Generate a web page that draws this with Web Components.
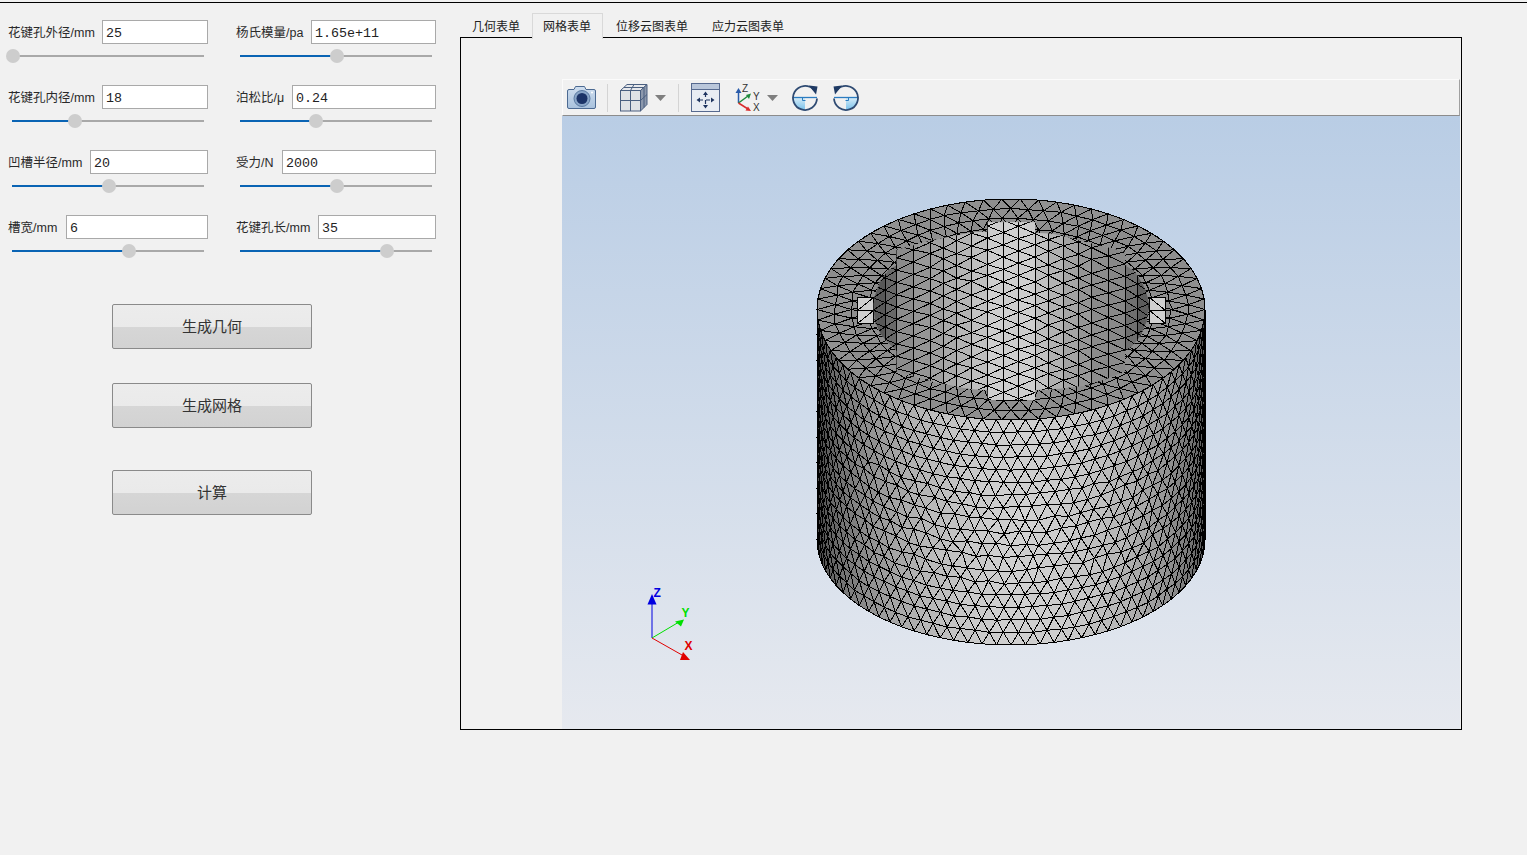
<!DOCTYPE html>
<html lang="zh">
<head>
<meta charset="utf-8">
<title>花键孔</title>
<style>
  html, body { margin: 0; height: 100%; background: #f1f1f1; overflow: hidden; }
  body { font-family: "Liberation Sans", "Noto Sans CJK SC", sans-serif; color: #222; }
</style>
</head>
<body>
<main-window>
  <param-panel slot="left">
    <param-field label="花键孔外径/mm" label-width="94" value="25" pos="1"></param-field>
    <param-field label="杨氏模量/pa" label-width="75" value="1.65e+11" pos="97"></param-field>
    <param-field label="花键孔内径/mm" label-width="94" value="18" pos="63"></param-field>
    <param-field label="泊松比/μ" label-width="56" value="0.24" pos="76"></param-field>
    <param-field label="凹槽半径/mm" label-width="82" value="20" pos="97"></param-field>
    <param-field label="受力/N" label-width="46" value="2000" pos="97"></param-field>
    <param-field label="槽宽/mm" label-width="58" value="6" pos="117"></param-field>
    <param-field label="花键孔长/mm" label-width="82" value="35" pos="147"></param-field>
    <div slot="actions">
      <push-button>生成几何</push-button>
      <push-button style="margin-top:34px">生成网格</push-button>
      <push-button style="margin-top:42px">计算</push-button>
    </div>
  </param-panel>
  <tab-panel slot="right" tabs="几何表单,网格表单,位移云图表单,应力云图表单" active="1">
    <viewer-pane>
      <viewer-toolbar slot="toolbar"></viewer-toolbar>
      <mesh-view></mesh-view>
    </viewer-pane>
  </tab-panel>
</main-window>

<script>
class MainWindow extends HTMLElement {
  constructor() {
    super();
    this.attachShadow({ mode: 'open' }).innerHTML = `
      <style>
        :host { display: block; height: 855px; box-sizing: border-box; padding-top: 2px; }
        .line { height: 1px; background: #000; }
        .row { display: flex; }
        .left { width: 460px; flex: none; }
        .right { flex: none; }
      </style>
      <div class="line"></div>
      <div class="row">
        <div class="left"><slot name="left"></slot></div>
        <div class="right"><slot name="right"></slot></div>
      </div>`;
  }
}

class ParamPanel extends HTMLElement {
  constructor() {
    super();
    this.attachShadow({ mode: 'open' }).innerHTML = `
      <style>
        :host { display: block; padding: 17px 0 0 8px; }
        .grid { display: grid; grid-template-columns: 200px 200px; column-gap: 28px; row-gap: 22px; }
        .actions { margin: 46px 0 0 104px; width: 200px; }
      </style>
      <div class="grid"><slot></slot></div>
      <div class="actions"><slot name="actions"></slot></div>`;
  }
}

class ParamField extends HTMLElement {
  connectedCallback() {
    const root = this.shadowRoot || this.attachShadow({ mode: 'open' });
    const pos = Number(this.getAttribute('pos'));
    root.innerHTML = `
      <style>
        :host { display: block; font: 12.5px "Liberation Sans", "Noto Sans CJK SC", sans-serif; color: #2a2a2a; }
        .top { display: flex; align-items: center; height: 24px; }
        .label { flex: none; width: ${this.getAttribute('label-width')}px; white-space: nowrap; padding-bottom: 2px; }
        .input {
          flex: 1; height: 24px; box-sizing: border-box; border: 1px solid #a9a9a9; background: #fff;
          padding: 3px 3px 0; font: 13.33px/20px "Liberation Mono", "DejaVu Sans Mono", monospace; color: #222;
        }
        .slider { position: relative; height: 14px; margin: 5px 4px 0; }
        .track { position: absolute; left: 0; right: 0; top: 6px; height: 2px; background: #a9a9a9; }
        .fill { position: absolute; left: 0; top: 6px; height: 2px; background: #0a64b4; width: ${pos}px; }
        .knob { position: absolute; top: 0; left: ${pos - 7}px; width: 14px; height: 14px; border-radius: 50%; background: #cdcdcd; }
      </style>
      <div class="top"><span class="label">${this.getAttribute('label')}</span><div class="input">${this.getAttribute('value')}</div></div>
      <div class="slider"><div class="track"></div><div class="fill"></div><div class="knob"></div></div>`;
  }
}

class PushButton extends HTMLElement {
  constructor() {
    super();
    this.attachShadow({ mode: 'open' }).innerHTML = `
      <style>
        :host {
          display: flex; align-items: center; justify-content: center; box-sizing: border-box;
          width: 200px; height: 45px; border: 1px solid #8a8a8a; border-radius: 2px; padding-bottom: 2px;
          background: linear-gradient(#ececec 0, #eaeaea 50%, #d6d6d6 52%, #d2d2d2 100%);
          font: 15px "Noto Sans CJK SC", sans-serif; color: #333;
        }
      </style>
      <slot></slot>`;
  }
}

class TabPanel extends HTMLElement {
  connectedCallback() {
    const root = this.shadowRoot || this.attachShadow({ mode: 'open' });
    const active = Number(this.getAttribute('active'));
    const tabs = this.getAttribute('tabs').split(',').map((t, i) =>
      `<div class="tab${i === active ? ' on' : ''}">${t}</div>`).join('');
    root.innerHTML = `
      <style>
        :host { display: block; width: 1002px; padding-top: 10px; font: 12px "Noto Sans CJK SC", sans-serif; color: #222; }
        .tabs { display: flex; height: 24px; position: relative; z-index: 1; }
        .tab { padding: 2px 12px 0; height: 22px; line-height: 22px; white-space: nowrap; }
        .tab.on { padding: 1px 11px 0 10px; height: 24px; border: 1px solid #d9d9d9; border-bottom: 0; background: #f1f1f1; margin-right: 1px; }
        .frame { box-sizing: border-box; height: 693px; border: 1px solid #000; padding: 41px 1px 0 101px; }
      </style>
      <div class="tabs">${tabs}</div>
      <div class="frame"><slot></slot></div>`;
  }
}

class ViewerPane extends HTMLElement {
  constructor() {
    super();
    this.attachShadow({ mode: 'open' }).innerHTML = `
      <style>
        :host { display: flex; flex-direction: column; height: 650px; }
      </style>
      <slot name="toolbar"></slot>
      <slot></slot>`;
  }
}

class ViewerToolbar extends HTMLElement {
  constructor() {
    super();
    const caret = `<svg class="caret" width="11" height="6" viewBox="0 0 11 6"><path d="M0 0h11L5.500 6z" fill="#7f7f7f"/></svg>`;
    const rotate = (flip) => `
      <svg width="28" height="28" viewBox="0 1 28 28" ${flip ? 'style="transform:scaleX(-1)"' : ''}>
        <defs><linearGradient id="q${flip}" x1="0" y1="0" x2="0" y2="1"><stop offset="0" stop-color="#d8edf8"/><stop offset="1" stop-color="#7cc3ec"/></linearGradient></defs>
        <path d="M2 14.500a12 12 0 0 0 12 12V14.500z" fill="url(#q${flip})"/>
        <path d="M2 14.500h24" stroke="#2b7cc0" stroke-width="1.300" fill="none"/>
        <path d="M11.500 14.500v3h3" stroke="#2b7cc0" stroke-width="1" fill="none"/>
        <path d="M22.500 6.500A12 12 0 1 0 26 15.500" stroke="#2e4a72" stroke-width="1.800" fill="none"/>
        <path d="M18 2.500l8.500 1-1.500 8z" fill="#1f3a64"/>
      </svg>`;
    this.attachShadow({ mode: 'open' }).innerHTML = `
      <style>
        :host {
          display: flex; align-items: center; box-sizing: border-box; height: 37px; flex: none;
          background: #f1f1f1; border-top: 1px solid #fbfbfb; border-left: 1px solid #fbfbfb;
          border-right: 1px solid #a0a0a0; border-bottom: 1px solid #8c8c8c; padding-left: 4px;
        }
        svg { display: block; flex: none; }
        .sep { width: 1px; height: 28px; background: #d4d4d4; flex: none; }
      </style>
      <svg width="30" height="28" viewBox="0 1 30 28">
        <defs>
          <linearGradient id="cam" x1="0" y1="0" x2="0" y2="1"><stop offset="0" stop-color="#cfdeef"/><stop offset="1" stop-color="#a9c2dd"/></linearGradient>
        </defs>
        <path d="M2 6.500h5l1.500-3h9l1.500 3h8q1.500 0 1.500 1.500v16q0 1.500-1.500 1.500h-25q-1.500 0-1.500-1.500V8q0-1.500 1.500-1.500z" fill="url(#cam)" stroke="#4c6a92" stroke-width="1"/>
        <circle cx="15" cy="15.500" r="8" fill="#8aa6c8" stroke="#5a7aa2"/>
        <circle cx="15" cy="15.500" r="5.500" fill="#1c3468"/>
        <circle cx="25" cy="9.500" r="1" fill="#fff"/>
      </svg>
      <div class="sep" style="margin-left:10px"></div>
      <svg style="margin-left:11px" width="29" height="29" viewBox="0 0 29 29">
        <path d="M1.500 7.500L8 1.500h20l-6.500 6z" fill="#e6e8ec" stroke="#4a5f80"/>
        <path d="M21.500 7.500L28 1.500v20L21.500 28z" fill="#8d99ad" stroke="#4a5f80"/>
        <rect x="1.500" y="7.500" width="20" height="20.500" fill="#dfe2e6" stroke="#4a5f80"/>
        <path d="M11.500 7.500V28M1.500 17.500h20M5 4.500h20M15 1.500l-3.500 6M25 4.500v20M21.500 17.500L28 11.500" stroke="#4a5f80" fill="none"/>
      </svg>
      <div style="margin-left:7px">${caret}</div>
      <div class="sep" style="margin-left:12px"></div>
      <svg style="margin-left:12px" width="29" height="29" viewBox="0 0 29 29">
        <rect x="0.500" y="0.500" width="28" height="28" fill="#e9edf3" stroke="#56698f"/>
        <rect x="1" y="1" width="27" height="5" fill="#b9c6da"/>
        <path d="M1 6.500h27" stroke="#56698f"/>
        <g stroke="#1f3560" stroke-width="1.200" fill="#1f3560">
          <path d="M14.500 10v14M8 17h13" fill="none" stroke-dasharray="4 3"/>
          <path d="M14.500 8.500l2.500 3.500h-5zM14.500 25.500l2.500-3.500h-5zM5.500 17l3.500-2.500v5zM23.500 17l-3.500-2.500v5z" stroke="none"/>
        </g>
      </svg>
      <svg style="margin-left:15px" width="28" height="29" viewBox="0 0 28 29" font-family="Liberation Sans, sans-serif" font-size="10" fill="#333">
        <path d="M3.500 20V8" stroke="#2a5cab" stroke-width="1.500"/><path d="M3.500 5l3 5h-6z" fill="#2a5cab"/>
        <path d="M3.500 20L13 13" stroke="#1f8a3c" stroke-width="1.500"/><path d="M16 10.500l-2 5.500-3-4z" fill="#1f8a3c"/>
        <path d="M3.500 20L13 26" stroke="#d92b2b" stroke-width="1.500"/><path d="M16 28l-5.500-.5 2.500-4z" fill="#d92b2b"/>
        <text x="7" y="9">Z</text><text x="18" y="17">Y</text><text x="18" y="28">X</text>
      </svg>
      <div style="margin-left:4px">${caret}</div>
      <div style="margin-left:13px">${rotate(0)}</div>
      <div style="margin-left:13px">${rotate(1)}</div>`;
  }
}

class MeshView extends HTMLElement {
  constructor() {
    super();
    this.attachShadow({ mode: 'open' }).innerHTML = `
      <style>
        :host { display: block; flex: 1; position: relative; background: linear-gradient(#b9cde5, #e6e9ef); }
        svg { position: absolute; left: 0; top: 0; }
      </style>
      <svg width="898" height="613" viewBox="562 116 898 613" shape-rendering="crispEdges">${this.model()}</svg>
      <svg width="898" height="613" viewBox="562 116 898 613" font-family="Liberation Sans, sans-serif" font-weight="700" font-size="12">
        <path d="M652 638V600" stroke="#0000e0"/>
        <path d="M652 594l4.500 10.500h-9z" fill="#0000e0"/>
        <path d="M652 638l27-16" stroke="#00e000"/>
        <path d="M684 619.500l-3 7-6-5z" fill="#00e000"/>
        <path d="M652 638l30 17" stroke="#e00000"/>
        <path d="M690 660l-10 0 3-8z" fill="#e00000"/>
        <text x="653.500" y="597" fill="#0000e0">Z</text>
        <text x="681.500" y="617" fill="#00e000">Y</text>
        <text x="684.500" y="650" fill="#e00000">X</text>
      </svg>`;
  }

  // 圆柱、环面、内孔分三层画，后画的盖住先画的
  model() {
    let seed = 12345;
    const rnd = () => { seed = (seed * 16807) % 2147483647; return seed / 2147483647; };
    const jit = (a) => (rnd() - 0.5) * a;
    const tri = (pts, v) => {
      const g = Math.max(0, Math.min(255, Math.round(v)));
      return `<polygon points="${pts.map(p => p[0].toFixed(1) + ',' + p[1].toFixed(1)).join(' ')}" fill="rgb(${g},${g},${g})"/>`;
    };
    const cx = 1011;
    let wall = '', ring = '', hole = '';

    // 外圆柱面
    const cols = 42, rows = 18, grid = [];
    for (let j = 0; j <= rows; j++) {
      const line = [];
      const h = j / rows;
      for (let i = 0; i <= cols; i++) {
        let t = Math.PI * (i + (j % 2 ? 0.5 : 0)) / cols;
        t = Math.min(Math.PI, t);
        const edge = i === 0 || i >= cols || j === 0 || j === rows;
        const midBand = h > 0.3 && h < 0.75 && Math.sin(t) > 0.6;
        const a = edge ? 0 : (midBand ? 3.5 : 1.2);
        const yc = 309.5 + (540 - 309.5) * h, ry = 110.5 - 5.5 * h;
        line.push([cx - 194 * Math.cos(t) + jit(a) * Math.sin(t), yc + ry * Math.sin(t) + jit(a), t]);
      }
      grid.push(line);
    }
    const shade = (t) => 80 + 128 * Math.pow(Math.sin(t), 1.4) - (Math.cos(t) < 0 ? 0 : 10 * Math.cos(t));
    for (let j = 0; j < rows; j++) {
      const A = grid[j], B = grid[j + 1];
      for (let i = 0; i < A.length - 1; i++) {
        const odd = j % 2 === 1;
        const p = odd ? [A[i], A[i + 1], B[i + 1]] : [A[i], A[i + 1], B[i]];
        const q = odd ? [B[i], B[i + 1], A[i]] : [B[i], B[i + 1], A[i + 1]];
        wall += tri(p, shade(p[0][2]) + jit(4));
        wall += tri(q, shade(q[0][2]) + jit(4));
      }
    }

    // 顶部环面
    const segs = 66, radii = [194, 177, 160, 143, 126, 110];
    const rp = radii.map((r, k) => {
      const line = [];
      for (let m = 0; m <= segs; m++) {
        const t = 2 * Math.PI * (m + (k % 2 ? 0.5 : 0)) / segs;
        const a = k === 0 ? 0 : 2;
        const rr = r + jit(a);
        line.push([cx + rr * Math.cos(t) + jit(a), 309.5 + rr * 0.5695 * Math.sin(t)]);
      }
      return line;
    });
    ring += `<ellipse cx="${cx}" cy="309.5" rx="194" ry="110.5" fill="#8f8f8f"/>`;
    for (let k = 0; k < radii.length - 1; k++) {
      const A = rp[k], B = rp[k + 1];
      for (let m = 0; m < segs; m++) {
        const odd = k % 2 === 1;
        const p = odd ? [A[m], A[m + 1], B[m + 1]] : [A[m], A[m + 1], B[m]];
        const q = odd ? [B[m], B[m + 1], A[m]] : [B[m], B[m + 1], A[m + 1]];
        ring += tri(p, 143 + jit(6)) + tri(q, 143 + jit(6));
      }
    }

    // 内孔轮廓，坐标取自放大图
    const z = (x, y) => [800 + x / 3, 190 + y / 3];
    const outline = [[562,97],[705,97],[705,128],[760,132],[870,160],[975,185],[975,225],[1005,245],[1030,285],[1043,320],[1046,350],[1040,395],[1020,440],[995,470],[975,482],[975,545],[870,585],[760,598],[705,600],[705,630],[562,630],[562,600],[510,597],[400,575],[290,545],[290,482],[265,460],[240,430],[225,395],[220,350],[225,315],[240,275],[265,240],[290,225],[290,180],[400,150],[520,127],[562,125]]
      .map(p => z(p[0], p[1]).map(n => n.toFixed(1)).join(',')).join(' ');

    const xs = [220,255,290,340,390,430,470,515,562,610,655,705,745,790,835,875,925,975,1012,1046].map(x => 800 + x / 3);
    const tones = [88,104,140,150,160,170,180,192,206,206,206,192,178,164,150,140,136,112,92];
    const rowStep = 12.3;
    const colV = xs.map((x, i) => {
      const d = (x - cx) / 137, line = [];
      for (let j = -1; j < 20; j++) {
        const y = 214 + j * rowStep + (i % 2 ? rowStep / 2 : 0) + 10 * d * d + (Math.abs(d) > 0.17 && Math.abs(d) < 0.7 ? jit(2.5) : 0);
        line.push([x, y]);
      }
      return line;
    });
    for (let i = 0; i < xs.length - 1; i++) {
      const A = colV[i], B = colV[i + 1];
      for (let j = 0; j < A.length - 1; j++) {
        const odd = i % 2 === 1;
        const p = odd ? [A[j], B[j], B[j + 1]] : [A[j], A[j + 1], B[j]];
        const q = odd ? [A[j], A[j + 1], B[j + 1]] : [B[j], B[j + 1], A[j + 1]];
        hole += tri(p, tones[i] + jit(4)) + tri(q, tones[i] + jit(4));
      }
    }

    // 两侧键槽底面
    const slot = (x0, x1, flip) => {
      const y0 = 297.5, y1 = 310.5, y2 = 323.5;
      const rect = (a, b) => flip
        ? tri([[x0, a], [x1, a], [x1, b]], 208) + tri([[x0, a], [x1, b], [x0, b]], 208)
        : tri([[x0, b], [x1, a], [x1, b]], 208) + tri([[x0, b], [x0, a], [x1, a]], 208);
      return rect(y0, y1) + rect(y1, y2);
    };

    return `
      <defs><clipPath id="hole"><polygon points="${outline}"/></clipPath></defs>
      <g stroke="#000" stroke-width="1" stroke-linejoin="round">
        ${wall}
        ${ring}
        ${slot(857.5, 873.5, false)}
        ${slot(1149.5, 1165.5, true)}
        <g clip-path="url(#hole)"><rect x="860" y="210" width="300" height="200" fill="#aaa" stroke="none"/>${hole}</g>
      </g>`;
  }
}

customElements.define('main-window', MainWindow);
customElements.define('param-panel', ParamPanel);
customElements.define('param-field', ParamField);
customElements.define('push-button', PushButton);
customElements.define('tab-panel', TabPanel);
customElements.define('viewer-pane', ViewerPane);
customElements.define('viewer-toolbar', ViewerToolbar);
customElements.define('mesh-view', MeshView);
</script>
</body>
</html>
